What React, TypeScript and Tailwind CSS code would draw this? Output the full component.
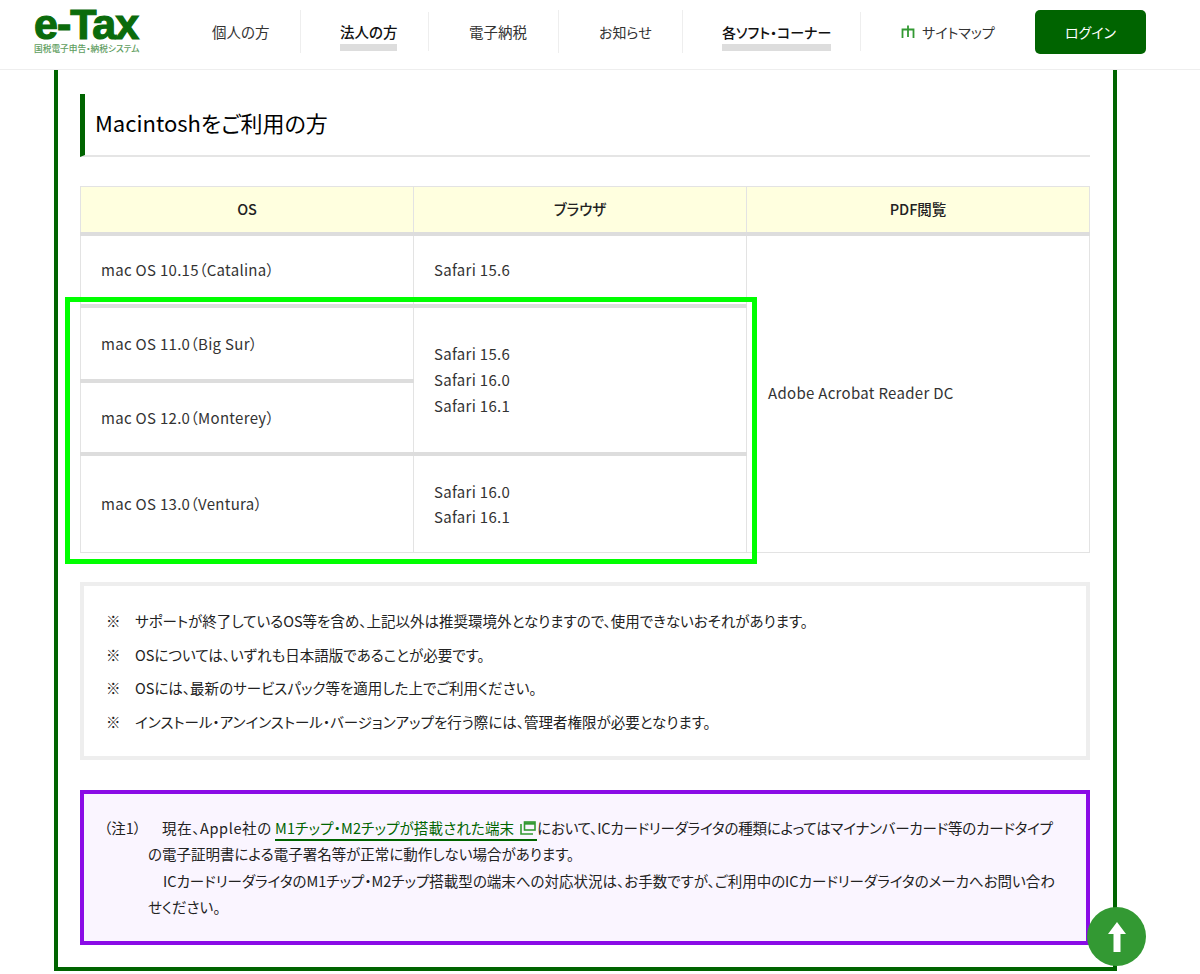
import { ReactNode } from "react";

const FONT = "font-['Noto_Sans_CJK_JP','Noto_Sans',sans-serif] [font-feature-settings:'palt']";

const NAV = [
  { label: "個人の方", width: "w-[129px]", size: "text-[14.5px]" },
  { label: "法人の方", width: "w-[128px]", size: "text-[14.5px]", current: true, sepShort: true },
  { label: "電子納税", width: "w-[130px]", size: "text-[14.5px]" },
  { label: "お知らせ", width: "w-[124px]", size: "text-[14px]" },
  { label: "各ソフト・コーナー", width: "w-[178px]", size: "text-[14px]", current: true, sepShort: true },
];

const NOTES = [
  "サポートが終了しているOS等を含め、上記以外は推奨環境外となりますので、使用できないおそれがあります。",
  "OSについては、いずれも日本語版であることが必要です。",
  "OSには、最新のサービスパック等を適用した上でご利用ください。",
  "インストール・アンインストール・バージョンアップを行う際には、管理者権限が必要となります。",
];

function Logo() {
  return (
    <div className="w-[172px] pl-[34px] pt-[8px] shrink-0 self-start">
      <div className="h-[33px] text-[43px] leading-[33px] font-bold tracking-[-1px] text-[#0b6b0b] font-['Liberation_Sans',sans-serif] [-webkit-text-stroke:1.2px_#0b6b0b]">
        e-Tax
      </div>
      <div className="mt-[2px] text-[8.7px] leading-[12px] whitespace-nowrap font-medium text-[#5f9e5f]">
        国税電子申告・納税システム
      </div>
    </div>
  );
}

function NavItem({ label, width, size, current, sepShort }: { label: string; width: string; size: string; current?: boolean; sepShort?: boolean }) {
  return (
    <div className={`${width} h-[44px] relative shrink-0 ${current ? "pl-[39px]" : "pl-[40px]"}`}>
      <div className="pt-[10px] w-fit">
        <div className={`${size} leading-[24px] whitespace-nowrap ${current ? "font-medium text-[#111]" : "text-[#333]"}`}>{label}</div>
        {current && <div className="h-[7px] bg-[#dddddd]" />}
      </div>
      <div className={`absolute right-0 w-px bg-[#eeeeee] ${sepShort ? "top-[2px] h-[39px]" : "top-0 h-[43px]"}`} />
    </div>
  );
}

function SitemapIcon() {
  return (
    <svg width="14" height="14" viewBox="0 0 14 14" fill="none" stroke="#339933" strokeWidth="1.8" className="shrink-0">
      <path d="M1.5 13V4.5H12.5V13" />
      <path d="M7 0.5V12" />
    </svg>
  );
}

function Header() {
  return (
    <header className="h-[70px] border-b border-[#eeeeee] flex bg-white">
      <Logo />
      <nav className="flex items-center self-start mt-[10px]">
        {NAV.map((n) => (
          <NavItem key={n.label} {...n} />
        ))}
        <div className="w-[174px] flex items-center gap-[7px] pl-[40px] text-[14px] text-[#333] whitespace-nowrap">
          <SitemapIcon />
          サイトマップ
        </div>
        <div className="w-[111px] h-[44px] rounded-[5px] bg-[#006400] text-white text-[14px] flex items-center justify-center">ログイン</div>
      </nav>
    </header>
  );
}

function Th({ children }: { children: ReactNode }) {
  return <th className="border border-b-[4px] border-[#e3e3e3] border-b-[#dddddd] bg-[#ffffdf] text-[14.5px] font-medium text-[#222] h-[47px] p-0">{children}</th>;
}

function Td({ children, rowSpan, className = "" }: { children: ReactNode; rowSpan?: number; className?: string }) {
  return (
    <td rowSpan={rowSpan} className={`border border-[#e3e3e3] pl-[20px] pt-[1px] text-[15px] leading-[25.7px] text-[#333] tracking-[0.3px] ${className}`}>
      {children}
    </td>
  );
}

function OsTable() {
  const thick = "border-t-[4px] border-t-[#dddddd]";
  return (
    <table className="mt-[29px] w-[1010px] table-fixed border-collapse">
      <colgroup>
        <col className="w-[333px]" />
        <col className="w-[333px]" />
        <col />
      </colgroup>
      <thead>
        <tr>
          <Th>OS</Th>
          <Th>ブラウザ</Th>
          <Th>PDF閲覧</Th>
        </tr>
      </thead>
      <tbody>
        <tr className="h-[72px]">
          <Td>mac OS 10.15（Catalina）</Td>
          <Td>Safari 15.6</Td>
          <Td rowSpan={4} className="pb-[2px]">
            <span className="ml-[1px]">Adobe Acrobat Reader DC</span>
          </Td>
        </tr>
        <tr className="h-[75px]">
          <Td className={thick}>mac OS 11.0（Big Sur）</Td>
          <Td rowSpan={2} className={thick}>
            Safari 15.6
            <br />
            Safari 16.0
            <br />
            Safari 16.1
          </Td>
        </tr>
        <tr className="h-[73px]">
          <Td className={thick}>mac OS 12.0（Monterey）</Td>
        </tr>
        <tr className="h-[99px]">
          <Td className={thick}>mac OS 13.0（Ventura）</Td>
          <Td className={thick}>
            Safari 16.0
            <br />
            Safari 16.1
          </Td>
        </tr>
      </tbody>
    </table>
  );
}

function ExternalIcon() {
  return (
    <svg width="16" height="14" viewBox="0 0 16 14" fill="none" stroke="#339933" strokeWidth="1.6" className="inline-block align-[-1px] ml-[6px] mr-[1px]">
      <path d="M1 3V13H13" />
      <rect x="4.5" y="1" width="10.5" height="8" strokeWidth="1.6" />
      <path d="M4.5 2.5H15" strokeWidth="2.4" />
    </svg>
  );
}

function Notes() {
  return (
    <div className="mt-[29px] h-[178px] border-[4px] border-[#eeeeee] pl-[22px] pt-[18px] text-[14.5px] leading-[33.7px] text-[#222]">
      {NOTES.map((n) => (
        <div key={n} className="flex">
          <span className="w-[29px] shrink-0">※</span>
          <span>{n}</span>
        </div>
      ))}
    </div>
  );
}

function Caution() {
  return (
    <div className="mt-[30px] h-[155px] border-[4px] border-[#8a0be6] bg-[#faf5ff] pl-[20px] pt-[21px] text-[14.5px] leading-[26.4px] text-[#222]">
      <p className="whitespace-nowrap">
        （注1）
        <span className="ml-[21px] tracking-[0.6px]">現在、Apple社の</span>{" "}
        <a className="text-[#006400] border-b-2 border-[#006400] pb-[1px] tracking-[0.15px]">
          M1チップ・M2チップが搭載された端末
          <ExternalIcon />
        </a>
        <span className="tracking-[-0.2px]">において、ICカードリーダライタの種類によってはマイナンバーカード等のカードタイプ</span>
      </p>
      <p className="pl-[44px]">の電子証明書による電子署名等が正常に動作しない場合があります。</p>
      <p className="pl-[59px] whitespace-nowrap">ICカードリーダライタのM1チップ・M2チップ搭載型の端末への対応状況は、お手数ですが、ご利用中のICカードリーダライタのメーカへお問い合わ</p>
      <p className="pl-[44px]">せください。</p>
    </div>
  );
}

export default function App() {
  return (
    <div className={`${FONT} relative h-[974px] w-[1200px] overflow-hidden bg-white`}>
      <Header />
      <main className="ml-[54px] w-[1063px] h-[901px] border-x-[4px] border-b-[4px] border-[#006400] pl-[22px] pr-[23px] pt-[24px]">
        <h2 className="h-[63px] border-l-[5px] border-b-[2px] border-l-[#006400] border-b-[#e5e5e5] pl-[10px] pb-[4px] flex items-center text-[22px] font-normal text-black">
          Macintoshをご利用の方
        </h2>
        <OsTable />
        <Notes />
        <Caution />
      </main>
      {/* 緑の枠はスクリーンショット上の注釈 */}
      <div className="absolute left-[65px] top-[297px] w-[692px] h-[267px] border-[5px] border-[#00ff00]" />
      <div className="absolute left-[1087px] top-[907px] w-[59px] h-[59px] rounded-full bg-[#339933] flex items-center justify-center">
        <svg width="20" height="30" viewBox="0 0 20 30" fill="white">
          <path d="M10 0L19 12H13.5V30H6.5V12H1Z" />
        </svg>
      </div>
    </div>
  );
}
